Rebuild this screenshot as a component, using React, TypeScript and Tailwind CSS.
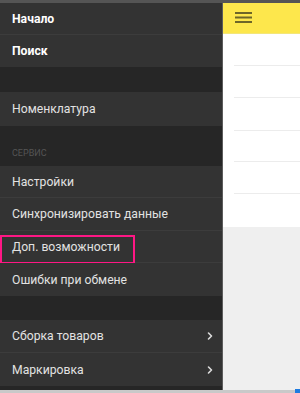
import { ChevronRight } from 'lucide-react';

const font = { fontFamily: 'Roboto, "Noto Sans", Arial, sans-serif' };

function Row({
  label,
  h,
  bold,
  chevron,
  last,
  highlight,
}: {
  label: string;
  h: string;
  bold?: boolean;
  chevron?: boolean;
  last?: boolean;
  highlight?: boolean;
}) {
  return (
    <div
      className={`relative flex items-center justify-between bg-[#333333] pl-[12px] pr-[6px] ${h} ${
        last ? '' : 'border-b border-[#3c3c3c]'
      }`}
    >
      <span
        className={
          bold
            ? 'pt-[1px] text-[12.2px] font-bold text-white'
            : 'pt-[1px] text-[12.2px] text-[#e2e2e2]'
        }
      >
        {label}
      </span>
      {chevron && <ChevronRight className="h-[12px] w-[12px] text-[#dcdcdc]" strokeWidth={3.2} />}
      {highlight && (
        <div className="absolute left-0 top-[4px] h-[29px] w-[135px] border-2 border-[#ff1785]" />
      )}
    </div>
  );
}

export default function App() {
  return (
    <div className="relative flex h-[393px] w-[300px] flex-col overflow-hidden bg-[#4d4d4d]" style={font}>
      <div className="h-[3px] bg-[#555555]" />
      <div className="flex min-h-0 flex-1">
        {/* Drawer */}
        <div className="flex w-[222px] flex-col bg-[#262626]">
          <Row label="Начало" h="h-[32px]" bold />
          <Row label="Поиск" h="h-[32px]" bold last />
          <div className="h-[25px]" />
          <Row label="Номенклатура" h="h-[34px]" last />
          <div className="flex h-[40px] items-end pb-[6px] pl-[12px]">
            <span className="text-[9px] uppercase text-[#555555]">Сервис</span>
          </div>
          <Row label="Настройки" h="h-[32px]" />
          <Row label="Синхронизировать данные" h="h-[33px]" />
          <Row label="Доп. возможности" h="h-[32px]" highlight />
          <Row label="Ошибки при обмене" h="h-[33px]" last />
          <div className="h-[24px]" />
          <Row label="Сборка товаров" h="h-[33px]" chevron />
          <Row label="Маркировка" h="h-[33px]" chevron last />
          <div className="flex-1" />
        </div>
        <div className="w-[1px] bg-[#5c5c5c]" />
        {/* Main pane */}
        <div className="flex flex-1 flex-col bg-[#efefef]">
          <div className="flex h-[31px] items-center border-b border-[#f3e67a] bg-[#fde74c] pl-[12px]">
            <svg width="18" height="12" viewBox="0 0 18 12">
              <rect x="0" y="0" width="17" height="2" fill="#6d6628" />
              <rect x="0" y="4.5" width="17" height="2" fill="#6d6628" />
              <rect x="0" y="9" width="17" height="2" fill="#6d6628" />
            </svg>
          </div>
          <div className="bg-white pl-[11px]">
            <div className="h-[32px] border-b border-[#ececec]" />
            <div className="h-[32px] border-b border-[#ececec]" />
            <div className="h-[33px] border-b border-[#ececec]" />
            <div className="h-[31px] border-b border-[#ececec]" />
            <div className="h-[32px] border-b border-[#ececec]" />
            <div className="h-[33px]" />
          </div>
        </div>
      </div>
      <div className="h-[3px] bg-[#c9c9c9]" />
      <div className="absolute bottom-0 right-0 h-[4px] w-[5px] bg-[#1e7be0]" />
    </div>
  );
}
